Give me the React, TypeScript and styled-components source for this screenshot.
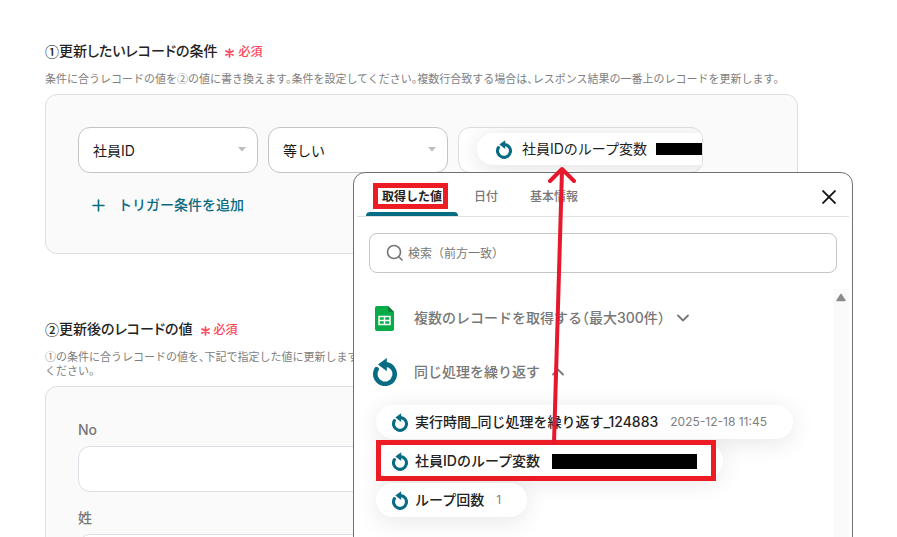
import React from "react";
import styled, { createGlobalStyle } from "styled-components";

const GlobalStyle = createGlobalStyle`
  *, *::before, *::after { box-sizing: border-box; }
  body { margin: 0; background: #fff; }
  body, button, input, select {
    font-family: Inter, "Noto Sans CJK JP", sans-serif;
  }
`;

const Page = styled.main`
  position: relative;
  height: 100vh;
  overflow: hidden;
  padding: 41px 99px 0 45px;
  font-size: 14px;
  line-height: 20px;
  color: #222;
`;

const Section = styled.section`
  margin-bottom: 65px;
`;

const Heading = styled.h2`
  display: flex;
  align-items: center;
  margin: 0 0 11px;
  font-size: 14px;
  font-weight: 500;
  line-height: 20px;
  font-feature-settings: "palt";
`;

const Circled = styled.span`
  font-family: "Noto Sans CJK JP", sans-serif;
  line-height: 1;
`;

const Required = styled.span`
  display: flex;
  align-items: center;
  gap: 4px;
  margin-left: 8px;
  padding-top: 1px;
  font-size: 12px;
  line-height: 19px;
  color: #ff4558;
`;

const Description = styled.p`
  margin: 0 0 8px;
  font-size: 11px;
  line-height: 14px;
  color: #808080;
  font-feature-settings: "halt";
`;

const Panel = styled.div`
  padding: 32px;
  border: 1px solid #dfdfe1;
  border-radius: 12px;
  background: #fafafa;
`;

const ConditionRow = styled.div`
  display: flex;
  gap: 10px;
`;

const SelectBox = styled.label`
  position: relative;
  flex: 0 0 180px;
  height: 46px;
  svg {
    position: absolute;
    right: 12px;
    top: 20px;
    pointer-events: none;
  }
`;

const Select = styled.select`
  width: 100%;
  height: 100%;
  padding: 0 14px;
  appearance: none;
  border: 1px solid #c4c4c4;
  border-radius: 12px;
  background: #fff;
  color: #1a1a1a;
  font-size: 14px;
`;

const TokenField = styled.div`
  flex: 0 1 245px;
  height: 46px;
  padding: 5px 0 0 18px;
  overflow: hidden;
  border: 1px solid #dcdce0;
  border-radius: 12px;
  background: #fff;
`;

const Token = styled.div`
  display: flex;
  align-items: center;
  width: max-content;
  height: 32px;
  padding: 0 18px;
  gap: 9px;
  border-radius: 16px;
  background: #fff;
  box-shadow: 0 3px 22px rgba(0, 0, 0, 0.12);
  color: #222;
  svg { margin: 0 1px; }
`;

const Redaction = styled.span<{ $w: number; $h: number }>`
  flex: none;
  width: ${(p) => p.$w}px;
  height: ${(p) => p.$h}px;
  background: #000;
`;

const AddButton = styled.button`
  display: flex;
  align-items: center;
  gap: 13px;
  margin: 22px 0 6px;
  padding: 0 14px;
  border: 0;
  background: none;
  color: #086b84;
  font-size: 14px;
  font-weight: 500;
  line-height: 20px;
`;

const Field = styled.label`
  display: block;
  margin-bottom: 15px;
  color: #777;
  font-size: 14px;
  font-weight: 500;
  line-height: 22px;
`;

const TextInput = styled.input`
  display: block;
  width: 100%;
  height: 46px;
  margin-top: 5px;
  padding: 0 14px;
  border: 1px solid #dcdfe6;
  border-radius: 12px;
  background: #fff;
  font-size: 14px;
`;

const Popup = styled.aside`
  position: absolute;
  left: 353px;
  top: 172px;
  bottom: -20px;
  width: 500px;
  padding: 0 3px;
  display: flex;
  flex-direction: column;
  border: 1px solid #707070;
  border-radius: 12px;
  background: #fff;
`;

const PopupHeader = styled.div`
  display: flex;
  justify-content: space-between;
  height: 44px;
  padding: 0 13px 0 9px;
  border-bottom: 1px solid #e2e2e2;
`;

const TabList = styled.div`
  display: flex;
`;

const Tab = styled.button<{ $active?: boolean }>`
  position: relative;
  padding: 4px 16px 0;
  border: 0;
  background: none;
  color: ${(p) => (p.$active ? "#222" : "#777")};
  font-size: 12px;
  font-weight: ${(p) => (p.$active ? 700 : 500)};
  line-height: 20px;
  &::after {
    content: "";
    position: absolute;
    inset: auto 0 0;
    height: 4px;
    border-radius: 4px 4px 0 0;
    background: ${(p) => (p.$active ? "#086b84" : "transparent")};
  }
`;

const TabLabel = styled.span`
  position: relative;
`;

const TabMark = styled.span`
  position: absolute;
  inset: -6px -6px -5px -9px;
  border: 5px solid #ed1c24;
`;

const CloseButton = styled.button`
  display: flex;
  align-items: center;
  padding: 5px 0 0;
  border: 0;
  background: none;
`;

const SearchBox = styled.label`
  display: flex;
  align-items: center;
  gap: 4px;
  height: 40px;
  margin: 16px 12px;
  padding: 2px 16px 0;
  border: 1px solid #c6c6c6;
  border-radius: 8px;
  svg { margin-bottom: 2px; }
`;

const SearchInput = styled.input`
  flex: 1;
  padding: 0;
  border: 0;
  outline: 0;
  font-size: 12px;
  line-height: 20px;
  &::placeholder { color: #777; opacity: 1; }
`;

const ScrollArea = styled.div`
  display: flex;
  flex: 1;
`;

const Results = styled.div`
  flex: 1;
  padding: 2px 0 0 15px;
`;

const Track = styled.div`
  width: 15px;
  padding: 4px 2px;
  background: #fafafa;
  svg { display: block; }
`;

const Group = styled.button`
  display: flex;
  align-items: center;
  height: 54px;
  padding: 0;
  border: 0;
  background: none;
  color: #777;
  font-size: 14px;
  font-weight: 500;
  line-height: 20px;
  font-feature-settings: "halt";
`;

const GroupIcon = styled.span`
  display: flex;
  justify-content: center;
  width: 25px;
  margin-right: 17px;
`;

const Chevron = styled.svg`
  margin-left: 11px;
`;

const ChipList = styled.ul`
  display: flex;
  flex-direction: column;
  align-items: flex-start;
  gap: 5px;
  margin: 6px 0 0;
  padding: 0 0 0 4px;
  list-style: none;
`;

const ChipItem = styled.li`
  position: relative;
`;

const Chip = styled.button`
  display: flex;
  align-items: center;
  height: 34px;
  padding: 0 26px 0 16px;
  border: 0;
  border-radius: 17px;
  background: #fff;
  box-shadow: 0 4px 24px rgba(0, 0, 0, 0.1);
  color: #222;
  font-size: 14px;
  font-weight: 500;
  line-height: 20px;
  svg { margin-right: 7px; }
`;

const ChipValue = styled.span`
  display: flex;
  margin-left: 12px;
  color: #808080;
  font-size: 12px;
  font-weight: 400;
`;

const ChipMark = styled.span`
  position: absolute;
  inset: -4px 7px -3px 0;
  border: 5px solid #ed1c24;
`;

const Pointer = styled.svg`
  position: absolute;
  left: 190px;
  top: -8px;
  pointer-events: none;
`;

const LoopIcon = ({ width = 16, height = 19 }: { width?: number; height?: number }) => (
  <svg width={width} height={height} viewBox="0 0 24 28" fill="none" aria-hidden="true">
    <path d="M3.6 11.2A9.7 9.7 0 1 0 13 6.4" stroke="#086b84" strokeWidth="4.6" strokeLinecap="round" />
    <path d="M5 6.5 13.8 0v13.2Z" fill="#086b84" />
  </svg>
);

const SheetIcon = () => (
  <svg width="19" height="25" viewBox="0 0 19 25" aria-hidden="true">
    <path d="M2 0h11l6 6v17a2 2 0 0 1-2 2H2a2 2 0 0 1-2-2V2a2 2 0 0 1 2-2Z" fill="#05ac47" />
    <path d="M13 0l6 6h-5a1 1 0 0 1-1-1Z" fill="#087d36" />
    <path d="M4 10.5h11v8H4Zm0 4h11M9.5 10.5v8" stroke="#fff" strokeWidth="1.5" fill="none" />
  </svg>
);

const Caret = () => (
  <svg width="8" height="5" viewBox="0 0 8 5" aria-hidden="true">
    <path d="M0 0h8L4 4.5Z" fill="#bdbdbd" />
  </svg>
);

const RequiredMark = () => (
  <Required>
    <svg width="9" height="14" viewBox="0 0 9 14" aria-hidden="true">
      <path d="M4.5 4v8M1 6l7 4M8 6l-7 4" stroke="#ff4558" strokeWidth="1.7" strokeLinecap="round" />
    </svg>
    必須
  </Required>
);

const ConditionSelect = ({ label, value }: { label: string; value: string }) => (
  <SelectBox>
    <Select aria-label={label} defaultValue={value}>
      <option>{value}</option>
    </Select>
    <Caret />
  </SelectBox>
);

const GroupChevron = ({ open }: { open?: boolean }) => (
  <Chevron width="14" height="10" viewBox="0 0 14 10" fill="none" aria-hidden="true">
    <path d={open ? "M2 7.5 7 2.5l5 5" : "M2 2.5l5 5 5-5"} stroke="#777" strokeWidth="1.8" strokeLinecap="round" />
  </Chevron>
);

export default function App() {
  return (
    <Page>
      <GlobalStyle />
      <Section>
        <Heading>
          <Circled>①</Circled>更新したいレコードの条件
          <RequiredMark />
        </Heading>
        <Description>
          条件に合うレコードの値を<Circled>②</Circled>の値に書き換えます。条件を設定してください。複数行合致する場合は、レスポンス結果の一番上のレコードを更新します。
        </Description>
        <Panel>
          <ConditionRow>
            <ConditionSelect label="項目" value="社員ID" />
            <ConditionSelect label="条件" value="等しい" />
            <TokenField>
              <Token>
                <LoopIcon />
                社員IDのループ変数
                <Redaction $w={60} $h={12} />
              </Token>
            </TokenField>
          </ConditionRow>
          <AddButton type="button">
            <svg width="13" height="13" viewBox="0 0 13 13" aria-hidden="true">
              <path d="M6.5 1v11M1 6.5h11" stroke="#086b84" strokeWidth="1.6" strokeLinecap="round" />
            </svg>
            トリガー条件を追加
          </AddButton>
        </Panel>
      </Section>

      <Section>
        <Heading>
          <Circled>②</Circled>更新後のレコードの値
          <RequiredMark />
        </Heading>
        <Description>
          <Circled>①</Circled>の条件に合うレコードの値を、下記で指定した値に更新します。
          <br />
          ください。
        </Description>
        <Panel>
          <Field>
            No
            <TextInput type="text" />
          </Field>
          <Field>
            姓
            <TextInput type="text" />
          </Field>
        </Panel>
      </Section>

      <Popup>
        <PopupHeader>
          <TabList role="tablist">
            <Tab type="button" role="tab" aria-selected="true" $active>
              <TabLabel>
                取得した値
                <TabMark />
              </TabLabel>
            </Tab>
            <Tab type="button" role="tab" aria-selected="false">日付</Tab>
            <Tab type="button" role="tab" aria-selected="false">基本情報</Tab>
          </TabList>
          <CloseButton type="button" aria-label="閉じる">
            <svg width="14" height="14" viewBox="0 0 14 14" aria-hidden="true">
              <path d="M.5.5l13 13M13.5.5l-13 13" stroke="#111" strokeWidth="1.8" />
            </svg>
          </CloseButton>
        </PopupHeader>
        <SearchBox>
          <svg width="18" height="18" viewBox="0 0 18 18" fill="none" aria-hidden="true">
            <circle cx="8" cy="8" r="6.5" stroke="#777" strokeWidth="1.6" />
            <path d="M12.8 12.8 16.5 16.5" stroke="#777" strokeWidth="1.6" />
          </svg>
          <SearchInput type="search" aria-label="検索" placeholder="検索（前方一致）" />
        </SearchBox>
        <ScrollArea>
          <Results>
            <Group type="button" aria-expanded="false">
              <GroupIcon><SheetIcon /></GroupIcon>
              複数のレコードを取得する（最大300件）
              <GroupChevron />
            </Group>
            <Group type="button" aria-expanded="true">
              <GroupIcon><LoopIcon width={24} height={28} /></GroupIcon>
              同じ処理を繰り返す
              <GroupChevron open />
            </Group>
            <ChipList>
              <ChipItem>
                <Chip type="button">
                  <LoopIcon />
                  実行時間_同じ処理を繰り返す_124883
                  <ChipValue>2025-12-18 11:45</ChipValue>
                </Chip>
              </ChipItem>
              <ChipItem>
                <Chip type="button">
                  <LoopIcon />
                  社員IDのループ変数
                  <ChipValue><Redaction $w={145} $h={15} /></ChipValue>
                </Chip>
                <ChipMark />
              </ChipItem>
              <ChipItem>
                <Chip type="button">
                  <LoopIcon />
                  ループ回数
                  <ChipValue>1</ChipValue>
                </Chip>
              </ChipItem>
            </ChipList>
          </Results>
          <Track>
            <svg width="10" height="9" viewBox="0 0 10 9" aria-hidden="true">
              <path d="M5 1.5 9 7.5H1Z" fill="#8b8b8b" stroke="#8b8b8b" strokeWidth="1.4" strokeLinejoin="round" />
            </svg>
          </Track>
        </ScrollArea>
        <Pointer width="40" height="286" viewBox="0 0 40 286" fill="none" aria-hidden="true">
          <path d="M10 278 18 5M6 16 18 4l12 12" stroke="#e6182d" strokeWidth="4" strokeLinecap="round" strokeLinejoin="round" />
        </Pointer>
      </Popup>
    </Page>
  );
}
